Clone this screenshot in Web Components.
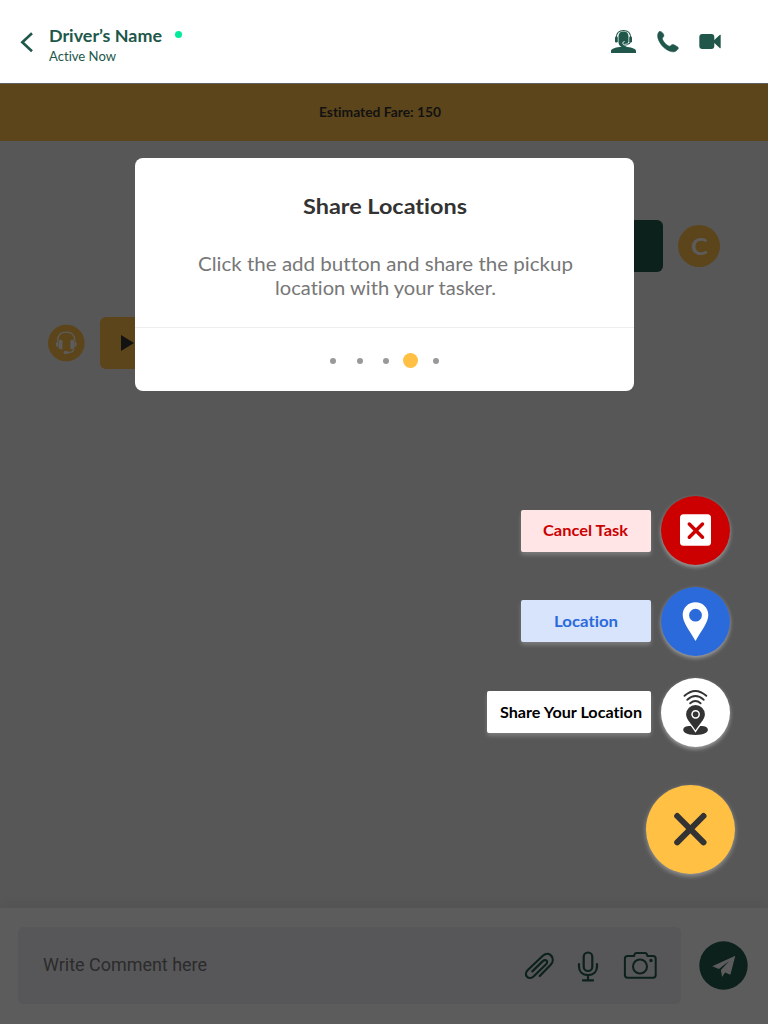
<!DOCTYPE html>
<html lang="en">
<head>
<meta charset="utf-8">
<title>Driver chat</title>
<style>
html,body{margin:0;height:100%}
body{background:#575757;font-family:Lato,"Open Sans",sans-serif}
</style>
</head>
<body>
<chat-screen></chat-screen>
<script>
const define=(name,html)=>customElements.define(name,class extends HTMLElement{
  constructor(){super();const t=document.createElement('template');t.innerHTML=html;
    this.attachShadow({mode:'open'}).append(t.content.cloneNode(true));}
});

// One line of text, widened so that it fills the width given in "w".
customElements.define('fit-text',class extends HTMLElement{
  constructor(){super();this.attachShadow({mode:'open'}).innerHTML='<style>:host{display:block;white-space:nowrap}span{display:inline-block;white-space:nowrap;transform-origin:0 50%;font-variant-ligatures:none}</style><span></span>';}
  connectedCallback(){
    const s=this.shadowRoot.querySelector('span'),text=this.getAttribute('text'),w=+this.getAttribute('w');
    s.textContent=text;
    const n=s.getBoundingClientRect().width;
    s.style.transform='scaleX('+w/n+')';s.style.marginRight=(w-n)+'px';
  }
});

define('chat-header',`<style>
:host{display:flex;box-sizing:border-box;height:84px;background:#fff;border-bottom:1px solid #606060;color:#21574a;padding:0 47px 0 20px;align-items:flex-start}
.back{margin:32px 15px 0 0;width:14px;height:21px}
.who{flex:1;padding-top:26px}
.name{display:flex;align-items:center;gap:13px;font:bold 17px/20px Lato,sans-serif}
.dot{width:7px;height:7px;border-radius:50%;background:#00eb9b;margin-top:-3px}
.sub{font:12.5px/16px Lato,sans-serif;margin-top:3px}
svg{display:block}
.tools{padding-top:28px}
</style>
<svg class="back" viewBox="20 32 14 21"><path d="M32 33.3 22.3 42.2 32 51.2" fill="none" stroke="#21574a" stroke-width="2.600"/></svg>
<div class="who"><div class="name"><fit-text text="Driver’s Name" w="113"></fit-text><i class="dot"></i></div>
<fit-text class="sub" text="Active Now" w="67"></fit-text></div>
<svg class="tools" width="111" height="28" viewBox="610 28 111 28" fill="#21574a">
<path d="M611 53v-2c0-2.200 3.800-3.200 8.500-3.900h8c4.700.7 8.500 1.700 8.500 3.900v2z"/>
<path d="M618.500 36c.2-2.900 2-4.400 5-4.400s4.800 1.500 5 4.400v6c0 3.200-2.500 5.500-5 5.500s-5-2.300-5-5.500z"/>
<path d="M616.300 37.500c.2-4.500 3-7 7.200-7s7 2.500 7.200 7" fill="none" stroke="#21574a" stroke-width="1.200"/>
<rect x="615" y="36.500" width="2.800" height="6" rx="1.300"/><rect x="629.200" y="36.500" width="2.800" height="6" rx="1.300"/>
<path d="M629.600 42.300c-.7 2-2.600 2.500-4.900 1.800" fill="none" stroke="#fff" stroke-width="2.400"/><path d="M624.500 41.500c-2 0-2.300 3.300 0 3.500" fill="none" stroke="#fff" stroke-width="1"/><path d="M630.300 42c-.7 2.200-2.800 2.700-5.600 1.600" fill="none" stroke="#21574a" stroke-width="1.100"/>
<path d="M659 31.700c1.500-.8 3 .2 4.200 2 1.300 2 .6 2.800-.4 3.900-.8.9-.5 2 .9 3.900 1.500 2.100 3 3.500 4.600 4.300 1.200.6 2 .4 2.900-.6.9-1 1.900-1.100 3.700 0l2.500 1.600c1.200.8 1.200 1.500.4 2.500-2 2.700-5 3.200-8.500 1.700-5.500-2.400-9.500-7.200-11.200-12.300-.8-2.600-.6-5.400.9-7z" stroke="#21574a" stroke-width=".6"/>
<rect x="699.300" y="34" width="15" height="15" rx="3"/><path d="M714 40.200l5.700-5.300q1-.6 1 .5v12.200q0 1.100-1 .5l-5.700-5.300z"/>
</svg>`);

define('fare-bar',`<style>:host{display:flex;height:57px;align-items:center;background:#5c451a;color:#121212;font:bold 12.5px/16px Lato,sans-serif;padding:0 8px 0 0;justify-content:center}</style><fit-text text="Estimated Fare: 150" w="122"></fit-text>`);

define('chat-thread',`<style>
:host{display:block;padding:79px 48px 0;height:767px;box-sizing:border-box}
.row{display:flex;align-items:center;gap:15px}.out{justify-content:flex-end}.in{margin-top:45px}
.b{width:130px;height:52px;border-radius:6px;background:#0c211c}
.in .b{background:#5c451a;display:flex;align-items:center}
.c{width:42px;height:42px;border-radius:50%;background:#5c451a;color:#5c5c5c;display:flex;align-items:center;justify-content:center;font:bold 23px/42px Lato,sans-serif}
</style>
<div class="row out"><div class="b"></div><div class="c"><fit-text text="C" w="17"></fit-text></div></div>
<div class="row in"><svg width="37" height="38" viewBox="0 0 37 38"><circle cx="18.300" cy="19" r="18.300" fill="#5c451a"/>
<g fill="none" stroke="#5c5c5c" stroke-width="1.300"><path d="M9.500 17c.2-5.600 3.500-8.800 8.700-8.800S26.700 11.400 27 17"/><path d="M26 24.500c-.3 3-1.800 4-5.500 4H18"/></g><g fill="#5c5c5c"><rect x="10.700" y="15.800" width="3.800" height="9.400" rx="1.500"/><rect x="22.300" y="15.800" width="3.800" height="9.400" rx="1.500"/><path d="M10.300 17.300c-2 .5-2.300 1.500-2.300 3s.3 2.600 2.300 3zM26.300 17.300c2 .5 2.300 1.500 2.300 3s-.3 2.600-2.300 3z"/><ellipse cx="17.800" cy="28.500" rx="2.200" ry="1.700"/></g></svg>
<div class="b"><svg width="36" height="18"><path d="M21 1v16l13-8z" fill="#121212"/></svg></div></div>`);

define('coach-card',`<style>
:host{display:block;background:#fff;border-radius:8px;text-align:center;color:#333}
.t{font:bold 20.500px/26px Lato,sans-serif;padding-top:35px}
.p{padding-top:33px;height:75px;color:#777;font:18.500px/24px Lato,sans-serif}
.p fit-text{padding-left:1px}
.d{border-top:1px solid #eee;height:63px;display:flex;align-items:center;justify-content:center}
i{width:6px;height:6px;border-radius:50%;background:#999;margin-right:20.500px}
i.on{width:15px;height:15px;background:#ffc043;margin-right:15px}i.n{margin-right:14px}i:last-child{margin:0}
.dots{display:flex;align-items:center;padding:2px 0 0 0}
</style>
<fit-text class="t" text="Share Locations" w="164"></fit-text>
<div class="p"><fit-text text="Click the add button and share the pickup" w="375"></fit-text><fit-text text="location with your tasker." w="221"></fit-text></div>
<div class="d"><div class="dots"><i></i><i></i><i class="n"></i><i class="on"></i><i></i></div></div>`);

define('action-item',`<style>
:host{display:flex;align-items:center;gap:10px;height:69px}
.l{box-sizing:border-box;width:var(--w,130px);height:42px;margin-top:var(--dy,0);border-radius:2px;background:var(--bg);color:var(--fg);display:flex;align-items:center;justify-content:center;font:bold 14.500px/20px Lato,sans-serif;box-shadow:0 3px 4px rgba(255,255,255,.22);padding:1px 1px 0 var(--pl,0)}
.c{width:69px;height:69px;border-radius:50%;background:var(--disc);box-shadow:0 2px 4px rgba(255,255,255,.45)}
</style><div class="l"><slot></slot></div><div class="c"><slot name="icon"></slot></div>`);

define('action-menu',`<style>
:host{display:flex;flex-direction:column;align-items:flex-end;gap:22px}
svg{display:block}
.close{width:89px;height:89px;border-radius:50%;background:#ffc043;box-shadow:0 2px 5px rgba(255,255,255,.4);margin:16px -5.400px 0 0}
</style>
<action-item style="--bg:#ffe5e5;--fg:#c00;--disc:#c00"><fit-text text="Cancel Task" w="85"></fit-text>
<svg slot="icon" width="69" height="69" viewBox="661 496 69 69"><rect x="680" y="514.300" width="31" height="31.500" rx="3.500" fill="#fff"/><path d="M689.300 524l13.200 13.200m0-13.200l-13.200 13.200" stroke="#c00" stroke-width="3.500" stroke-linecap="round"/></svg></action-item>
<action-item style="--bg:#d7e4fb;--fg:#2b6adb;--disc:#2b6adb;--dy:-1px"><fit-text text="Location" w="64"></fit-text>
<svg slot="icon" width="69" height="69" viewBox="661 587 69 69"><path fill="#fff" fill-rule="evenodd" d="M695.500 602.300c-7.200 0-12.800 5.500-12.800 12.700 0 7.500 7 15.500 12.800 26 5.800-10.500 12.800-18.500 12.800-26 0-7.200-5.600-12.700-12.800-12.700zm0 6.500a6.400 6.400 0 1 1 0 12.800 6.400 6.400 0 0 1 0-12.800z"/></svg></action-item>
<action-item style="--bg:#fff;--fg:#000;--disc:#fff;--w:164px;--pl:5px;--dy:-1px"><fit-text text="Share Your Location" w="142"></fit-text>
<svg slot="icon" width="69" height="69" viewBox="661 678 69 69"><g fill="none" stroke="#333" stroke-width="1.900" stroke-linecap="round"><path d="M684.500 695.800q10.800-9.800 21.800 0M687.300 699.800q8.200-7.400 16.400 0M690.200 703.300q5.200-4.400 10.400 0"/></g>
<path d="M689 726c-6 .3-7.300 4.300-4 6.700 4.800 2.900 16 2.900 21 0 3.500-2.400 2-6.500-4-6.700z" fill="#333"/><path d="M695.500 705a9.400 9.400 0 0 0-9.400 9.300c0 5.200 5.400 9.500 9.400 16 4-6.500 9.400-10.800 9.400-16a9.400 9.400 0 0 0-9.400-9.300z" fill="#333" stroke="#fff" stroke-width="2.600" paint-order="stroke"/><circle cx="695.600" cy="714.300" r="3.600" fill="#333" stroke="#fff" stroke-width="1.500"/></svg></action-item>
<div class="close"><svg width="89" height="89" viewBox="646.500 785 89 89"><path d="M677.700 816l26.300 26.300m0-26.300l-26.300 26.300" stroke="#333" stroke-width="6" stroke-linecap="round"/></svg></div>`);

define('comment-bar',`<style>
:host{display:flex;box-sizing:border-box;height:116px;background:#5c5c5c;padding:19px 20px 20px 18px;gap:18px;align-items:center;box-shadow:0 -2px 12px rgba(0,0,0,.06)}
.f{flex:1;height:77px;border-radius:6px;background:#575759;display:flex;align-items:center;color:#2b2b2b;font:18px/24px Roboto,sans-serif;padding:0 23px 0 25px;box-sizing:border-box}
.f fit-text{flex:1;padding-bottom:2px}
svg{display:block}
</style>
<div class="f"><fit-text text="Write Comment here" w="164"></fit-text>
<svg width="136" height="36" viewBox="522 948 136 36" fill="none" stroke="#0c211c" stroke-width="2.200" stroke-linecap="round" stroke-linejoin="round">
<path d="M539.700 976l11-11.300c5.500-6-1-14.300-7.600-9.200l-15.300 14.500c-5 5 1 11 6 6.300l12.300-12c2.700-3-.5-5.600-3.300-3.200l-10.500 10.300"/>
<rect x="583.700" y="952.500" width="8.600" height="18.500" rx="4.300"/><path d="M579 964v2.500c0 5.300 3.500 8.600 9 8.600s9-3.300 9-8.600V964M588 975.500v4.700M583 980.400h10"/>
<path stroke-width="2" d="M627.600 956h6.400q.5-3 2.500-3h8.500q2 0 2.500 3h5.500q2.700 0 2.700 2.700v16.300q0 2.700-2.700 2.700h-25.400q-2.700 0-2.700-2.700v-16.300q0-2.700 2.700-2.700z"/><circle cx="640" cy="966.500" r="7" stroke-width="2"/><circle cx="651" cy="960.500" r="1" fill="#0c211c" stroke-width="1.500"/></svg></div>
<svg width="49" height="49" viewBox="698.700 941 49 49"><circle cx="723.200" cy="965.500" r="24.200" fill="#0c211c"/><path fill="#5c5c5c" d="M735 955.800l-23 10.500 6.600 2.800 10.200-8-8.200 9 1.200 6.800 3-4.300 5.300 2.200z"/></svg>`);

define('chat-screen',`<style>
:host{display:flex;flex-direction:column;position:relative;width:768px;height:1024px;background:#575757;overflow:hidden}
chat-header,fare-bar,chat-thread,comment-bar{flex-shrink:0}
coach-card{position:absolute;left:135.400px;top:158px;width:499px;height:233px}
action-menu{position:absolute;right:38px;top:496px}
</style>
<chat-header></chat-header><fare-bar></fare-bar><chat-thread></chat-thread><comment-bar></comment-bar>
<coach-card></coach-card><action-menu></action-menu>`);
</script>
</body>
</html>
